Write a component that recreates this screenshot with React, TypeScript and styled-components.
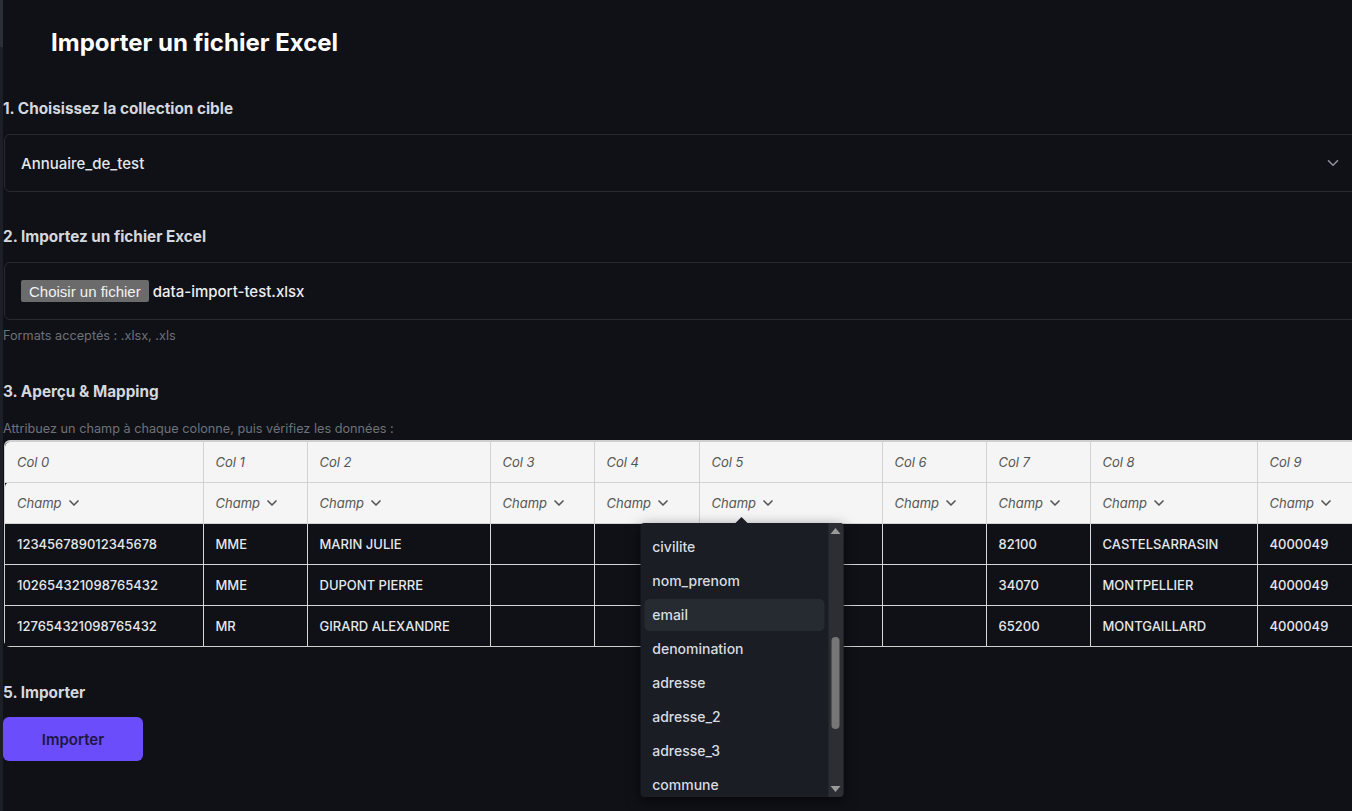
import React from "react";
import styled, { createGlobalStyle } from "styled-components";
import { ChevronDown } from "lucide-react";

const GlobalStyle = createGlobalStyle`
  html, body {
    margin: 0;
    padding: 0;
    background: #0f1117;
    overflow: hidden;
  }
  body {
    font-family: Inter, "Noto Sans", sans-serif;
    color: #d4d8de;
  }
  * { box-sizing: border-box; }
`;

const Page = styled.div`
  display: flex;
  min-height: 811px;
`;

const EdgeStrip = styled.div`
  width: 3px;
  flex: 0 0 3px;
  display: flex;
  flex-direction: column;
  background: #1c1f25;
`;

const EdgeTop = styled.div`
  height: 47px;
  background: #2b2f36;
`;

const Main = styled.main`
  flex: 0 0 1357px;
  width: 1357px;
  display: flex;
  flex-direction: column;
`;

const Title = styled.h1`
  margin: 28px 0 0 48px;
  font-size: 24px;
  line-height: 30px;
  font-weight: 700;
  color: #ffffff;
`;

const StepTitle = styled.h2<{ $top: number }>`
  margin: ${(p) => p.$top}px 0 0 0;
  font-size: 15.3px;
  line-height: 20px;
  font-weight: 700;
  color: #d4d8de;
`;

const Box = styled.div<{ $top: number }>`
  margin: ${(p) => p.$top}px 0 0 1px;
  height: 58px;
  border: 1px solid #262a32;
  border-radius: 6px;
  display: flex;
  align-items: center;
  padding: 0 18px 0 16px;
  background: #0f1117;
`;

const SelectValue = styled.span`
  flex: 1;
  font-size: 15px;
  color: #e5e7eb;
  font-weight: 500;
`;

const SelectChevron = styled(ChevronDown)`
  color: #8b8f98;
  margin-right: -1px;
`;

const FileButton = styled.span`
  display: inline-flex;
  align-items: center;
  height: 22px;
  padding: 0 8px;
  background: #6b6b6b;
  color: #f2f2f2;
  border-radius: 2px;
  font-family: "Liberation Sans", Arial, sans-serif;
  font-size: 15px;
`;

const FileName = styled.span`
  margin-left: 4px;
  font-size: 15px;
  font-weight: 500;
  color: #eeeeee;
`;

const Hint = styled.p<{ $top: number }>`
  margin: ${(p) => p.$top}px 0 0 0;
  font-size: 12.7px;
  line-height: 16px;
  color: #6e7178;
`;

const TableFrame = styled.div`
  margin: 3px 0 0 1px;
  border: 1px solid #cfcfcf;
  border-top-width: 2px;
  border-right: none;
  border-radius: 6px 0 0 6px;
  width: max-content;
`;

const Table = styled.table`
  border-collapse: collapse;
  table-layout: fixed;
`;

const Col = styled.col<{ $w: number }>`
  width: ${(p) => p.$w}px;
`;

const HeadCell = styled.th`
  height: 41px;
  padding: 0 12px;
  background: #f5f5f5;
  border: 1px solid #d2d2d2;
  text-align: left;
  font-weight: 400;
  font-style: italic;
  font-size: 13px;
  color: #555555;
  vertical-align: middle;
  white-space: nowrap;
  tr:first-child > & { border-top: none; height: 40px; }
  &:first-child { border-left: none; border-top-left-radius: 5px; }
`;

const Cell = styled.td`
  height: 41px;
  padding: 0 12px;
  border: 1px solid #d6d6d6;
  font-size: 13px;
  font-weight: 500;
  color: #e5e7eb;
  vertical-align: middle;
  white-space: nowrap;
  background: #0f1117;
  &:first-child { border-left: none; }
  tr:last-child > & { border-bottom: none; }
`;

const Trigger = styled.span`
  position: relative;
  display: inline-flex;
  align-items: center;
  gap: 4px;
`;

const Popover = styled.div`
  position: absolute;
  top: calc(100% + 12px);
  left: 50%;
  transform: translateX(calc(-50% - 2px));
  width: 203px;
  height: 274px;
  background: #1a1d23;
  border-radius: 4px;
  box-shadow: 0 4px 14px rgba(0, 0, 0, 0.55);
  display: flex;
  z-index: 5;
  font-style: normal;
  &::before {
    content: "";
    position: absolute;
    top: -6px;
    left: 50%;
    margin-left: -6px;
    border-left: 6px solid transparent;
    border-right: 6px solid transparent;
    border-bottom: 6px solid #1a1d23;
  }
`;

const OptionList = styled.ul`
  flex: 1;
  margin: 0;
  padding: 8px 4px 0 4px;
  list-style: none;
  overflow: hidden;
  display: flex;
  flex-direction: column;
  gap: 2px;
`;

const Option = styled.li<{ $active?: boolean }>`
  flex: 0 0 32px;
  display: flex;
  align-items: center;
  padding: 0 8px;
  border-radius: 5px;
  font-size: 14px;
  font-weight: 500;
  color: #d8dce2;
  background: ${(p) => (p.$active ? "#262a31" : "transparent")};
`;

const ScrollTrack = styled.div`
  width: 15px;
  flex: 0 0 15px;
  background: #2c2e33;
  border-radius: 0 4px 4px 0;
  display: flex;
  flex-direction: column;
  align-items: center;
`;

const Arrow = styled.div<{ $up?: boolean }>`
  margin: ${(p) => (p.$up ? "5px 0 0" : "auto 0 5px")};
  border-left: 5px solid transparent;
  border-right: 5px solid transparent;
  ${(p) => (p.$up ? "border-bottom" : "border-top")}: 6px solid #9a9a9a;
`;

const Thumb = styled.div`
  margin-top: 103px;
  width: 8px;
  height: 92px;
  border-radius: 4px;
  background: #767676;
`;

const ImportButton = styled.button`
  margin: 14px 0 0 0;
  width: 140px;
  height: 44px;
  border: none;
  border-radius: 6px;
  background: #6c4dfb;
  color: #1d1742;
  font-family: Inter, sans-serif;
  font-size: 15px;
  font-weight: 600;
`;

const widths = [198, 104, 183, 104, 105, 183, 104, 104, 167, 120];

const rows = [
  ["123456789012345678", "MME", "MARIN JULIE", "", "", "", "", "82100", "CASTELSARRASIN", "4000049"],
  ["102654321098765432", "MME", "DUPONT PIERRE", "", "", "", "", "34070", "MONTPELLIER", "4000049"],
  ["127654321098765432", "MR", "GIRARD ALEXANDRE", "", "", "", "", "65200", "MONTGAILLARD", "4000049"],
];

const options = ["civilite", "nom_prenom", "email", "denomination", "adresse", "adresse_2", "adresse_3", "commune"];

export default function App() {
  return (
    <>
      <GlobalStyle />
      <Page>
        <EdgeStrip>
          <EdgeTop />
        </EdgeStrip>
        <Main>
          <Title>Importer un fichier Excel</Title>

          <StepTitle $top={41}>1. Choisissez la collection cible</StepTitle>
          <Box $top={15}>
            <SelectValue>Annuaire_de_test</SelectValue>
            <SelectChevron size={18} strokeWidth={2.2} />
          </Box>

          <StepTitle $top={35}>2. Importez un fichier Excel</StepTitle>
          <Box $top={15}>
            <FileButton>Choisir un fichier</FileButton>
            <FileName>data-import-test.xlsx</FileName>
          </Box>
          <Hint $top={8}>Formats acceptés : .xlsx, .xls</Hint>

          <StepTitle $top={38}>3. Aperçu &amp; Mapping</StepTitle>
          <Hint $top={19}>Attribuez un champ à chaque colonne, puis vérifiez les données :</Hint>
          <TableFrame>
            <Table>
              <colgroup>
                {widths.map((w, i) => (
                  <Col key={i} $w={w} />
                ))}
              </colgroup>
              <thead>
                <tr>
                  {widths.map((_, i) => (
                    <HeadCell key={i}>Col {i}</HeadCell>
                  ))}
                </tr>
                <tr>
                  {widths.map((_, i) => (
                    <HeadCell key={i}>
                      <Trigger>
                        Champ <ChevronDown size={16} strokeWidth={2.5} />
                        {i === 5 && (
                          <Popover>
                            <OptionList>
                              {options.map((o) => (
                                <Option key={o} $active={o === "email"}>
                                  {o}
                                </Option>
                              ))}
                            </OptionList>
                            <ScrollTrack>
                              <Arrow $up />
                              <Thumb />
                              <Arrow />
                            </ScrollTrack>
                          </Popover>
                        )}
                      </Trigger>
                    </HeadCell>
                  ))}
                </tr>
              </thead>
              <tbody>
                {rows.map((r, ri) => (
                  <tr key={ri}>
                    {r.map((c, ci) => (
                      <Cell key={ci}>{c}</Cell>
                    ))}
                  </tr>
                ))}
              </tbody>
            </Table>
          </TableFrame>

          <StepTitle $top={36}>5. Importer</StepTitle>
          <ImportButton>Importer</ImportButton>
        </Main>
      </Page>
    </>
  );
}
